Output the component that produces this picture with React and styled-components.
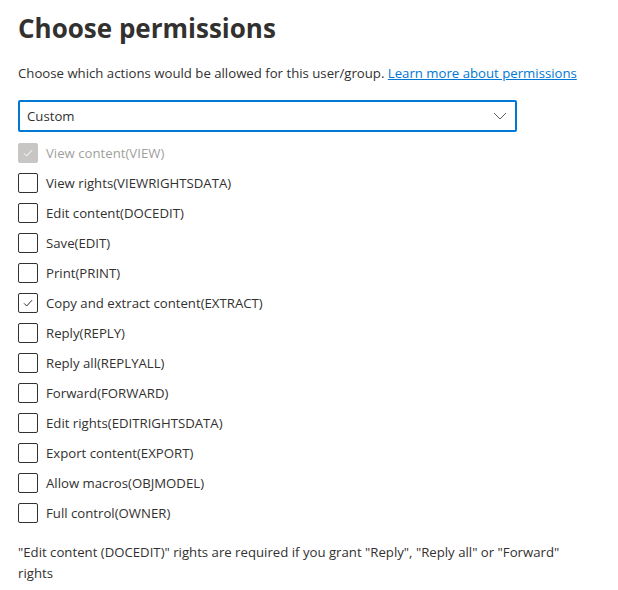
import styled, { createGlobalStyle } from "styled-components";

const GlobalStyle = createGlobalStyle`
  body {
    margin: 0;
    background: #ffffff;
    font-family: "Open Sans", "Liberation Sans", Arial, sans-serif;
    color: #323130;
  }
`;

const Page = styled.div`
  width: 618px;
  height: 590px;
  padding: 10px 18px 0 18px;
  box-sizing: border-box;
`;

const Title = styled.h1`
  margin: 0;
  font-size: 26px;
  font-weight: 700;
  line-height: 36px;
  color: #323130;
`;

const Intro = styled.p`
  margin: 17px 0 0 0;
  font-size: 13.2px;
  line-height: 20px;
`;

const LearnLink = styled.a`
  color: #0078d4;
  text-decoration: underline;
`;

const Select = styled.div`
  margin-top: 17px;
  width: 499px;
  height: 32px;
  box-sizing: border-box;
  border: 2px solid #0078d4;
  border-radius: 2px;
  display: flex;
  align-items: center;
  justify-content: space-between;
  padding: 0 8px 0 7px;
  font-size: 13.2px;
`;

const Options = styled.div`
  margin-top: 11px;
  display: flex;
  flex-direction: column;
  gap: 10px;
`;

const Row = styled.label`
  display: flex;
  align-items: center;
  gap: 8px;
  height: 20px;
  font-size: 13.2px;
  color: ${(p) => (p.disabled ? "#a19f9d" : "#323130")};
`;

const Box = styled.span`
  width: 20px;
  height: 20px;
  box-sizing: border-box;
  border-radius: 2px;
  border: 1px solid ${(p) => (p.disabled ? "#c8c6c4" : "#323130")};
  background: ${(p) => (p.disabled ? "#c8c6c4" : "#ffffff")};
  display: flex;
  align-items: center;
  justify-content: center;
`;

const Note = styled.p`
  margin: 19px 0 0 0;
  font-size: 13.2px;
  line-height: 21px;
  width: 575px;
`;

const Check = ({ color }) => (
  <svg width="12" height="12" viewBox="0 0 12 12">
    <path d="M2 6.3 L4.7 9 L10 3.2" fill="none" stroke={color} strokeWidth="1" />
  </svg>
);

const permissions = [
  { label: "View content(VIEW)", checked: true, disabled: true },
  { label: "View rights(VIEWRIGHTSDATA)" },
  { label: "Edit content(DOCEDIT)" },
  { label: "Save(EDIT)" },
  { label: "Print(PRINT)" },
  { label: "Copy and extract content(EXTRACT)", checked: true },
  { label: "Reply(REPLY)" },
  { label: "Reply all(REPLYALL)" },
  { label: "Forward(FORWARD)" },
  { label: "Edit rights(EDITRIGHTSDATA)" },
  { label: "Export content(EXPORT)" },
  { label: "Allow macros(OBJMODEL)" },
  { label: "Full control(OWNER)" },
];

export default function App() {
  return (
    <Page>
      <GlobalStyle />
      <Title>Choose permissions</Title>
      <Intro>
        Choose which actions would be allowed for this user/group.{" "}
        <LearnLink href="#">Learn more about permissions</LearnLink>
      </Intro>
      <Select>
        <span>Custom</span>
        <svg width="14" height="8" viewBox="0 0 14 8">
          <path d="M1 1 L7 7 L13 1" fill="none" stroke="#605e5c" strokeWidth="1" />
        </svg>
      </Select>
      <Options>
        {permissions.map((p) => (
          <Row key={p.label} disabled={p.disabled}>
            <Box disabled={p.disabled}>
              {p.checked && <Check color={p.disabled ? "#ffffff" : "#323130"} />}
            </Box>
            {p.label}
          </Row>
        ))}
      </Options>
      <Note>
        "Edit content (DOCEDIT)" rights are required if you grant "Reply", "Reply all" or "Forward"
        rights
      </Note>
    </Page>
  );
}
